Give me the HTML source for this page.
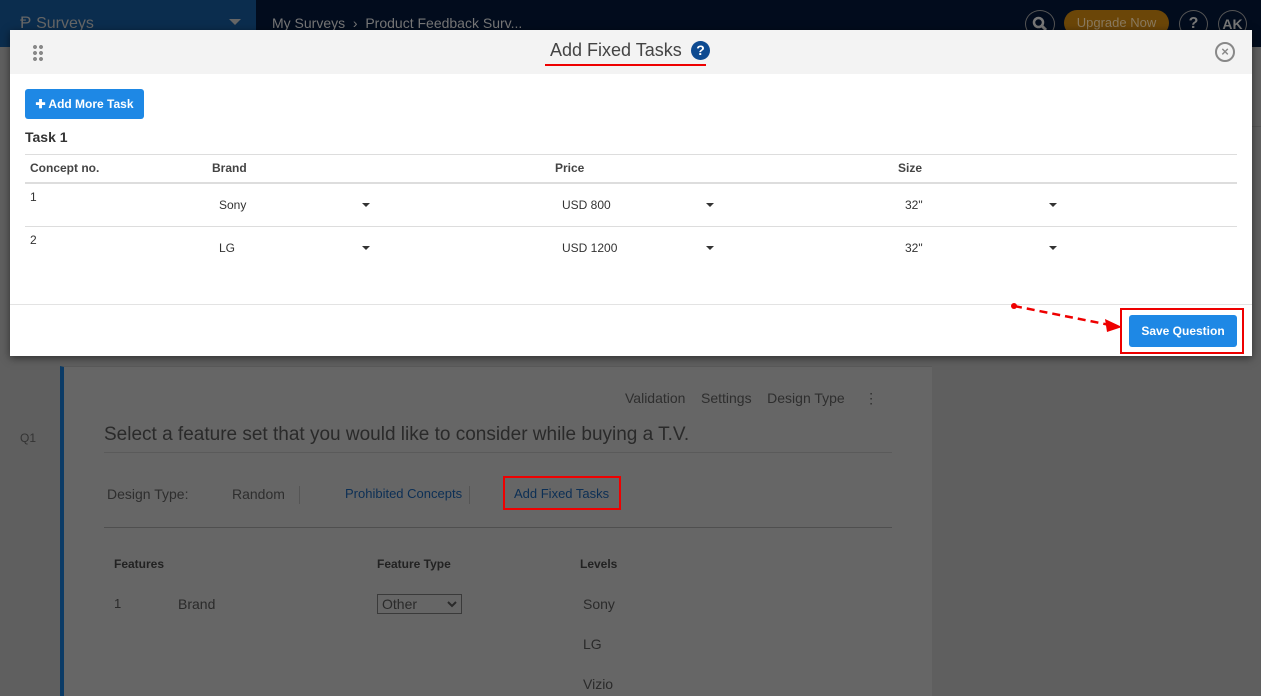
<!DOCTYPE html>
<html><head><meta charset="utf-8"><style>
*{box-sizing:border-box;margin:0;padding:0}
body{width:1261px;height:690px;overflow:hidden;background:#5f5f5f;font-family:"Liberation Sans",sans-serif;position:relative;font-size:12px;color:#333}
.abs{position:absolute}
.nav{left:0;top:0;width:1261px;height:47px;background:#020c1d}
.navl{left:0;top:0;width:256px;height:47px;background:#0b2d4e}
.card{left:60px;top:366px;width:872px;height:330px;background:#666;border-left:4px solid #0b3b66;border-top:1px solid #595959}
.modal{left:10px;top:30px;width:1242px;height:326px;background:#fff;box-shadow:0 2px 8px rgba(0,0,0,.5)}
.mh{left:0;top:0;width:1242px;height:44px;background:#f3f3f3}
.btn{background:#1e88e5;color:#fff;border-radius:3px;font-weight:bold;font-size:12px}
.row{position:absolute;left:15px;width:1212px;border-top:1px solid #ddd}
.caret{position:absolute;width:0;height:0;border-left:4px solid transparent;border-right:4px solid transparent;border-top:4px solid #333}
</style></head><body>
<div class="abs nav"></div>
<div class="abs navl"></div>
<div class="abs" style="left:20px;top:13px;color:#666;font-size:17px">Ᵽ <span style="font-size:16px">Surveys</span></div>
<div class="abs" style="left:229px;top:19px;border-left:6px solid transparent;border-right:6px solid transparent;border-top:6px solid #666"></div>
<div class="abs" style="left:272px;top:15px;color:#777;font-size:14px">My Surveys &nbsp;›&nbsp; Product Feedback Surv...</div>
<div class="abs" style="left:1025px;top:10px;width:30px;height:28px;border:1px solid #555;border-radius:50%"></div>
<svg class="abs" style="left:1031px;top:15px" width="18" height="18"><circle cx="7.5" cy="7.5" r="4.5" stroke="#777" stroke-width="2.5" fill="none"/><line x1="11" y1="11" x2="15" y2="15" stroke="#777" stroke-width="3"/></svg>
<div class="abs" style="left:1064px;top:10px;width:105px;height:26px;background:#6b4608;border-radius:13px;color:#8a7a60;font-size:13px;text-align:center;line-height:26px">Upgrade Now</div>
<div class="abs" style="left:1179px;top:10px;width:29px;height:28px;border:1px solid #555;border-radius:50%;color:#777;text-align:center;font-weight:bold;font-size:16px;line-height:26px">?</div>
<div class="abs" style="left:1218px;top:10px;width:29px;height:28px;border:1px solid #555;border-radius:50%;color:#777;text-align:center;font-weight:bold;font-size:14px;line-height:26px">AK</div>
<div class="abs" style="left:1252px;top:126px;width:9px;height:1px;background:#555"></div>

<div class="abs" style="left:20px;top:431px;color:#333;font-size:12px">Q1</div>
<div class="abs card"></div>
<div class="abs" style="left:625px;top:390px;color:#2e2e2e;font-size:14px">Validation &nbsp;&nbsp; Settings &nbsp;&nbsp; Design Type &nbsp;&nbsp;&nbsp;&nbsp;⋮</div>
<div class="abs" style="left:104px;top:424px;color:#2a2a2a;font-size:19px">Select a feature set that you would like to consider while buying a T.V.</div>
<div class="abs" style="left:104px;top:452px;width:788px;height:1px;background:#5a5a5a"></div>
<div class="abs" style="left:107px;top:486px;color:#2e2e2e;font-size:14px">Design Type:</div>
<div class="abs" style="left:232px;top:486px;color:#2e2e2e;font-size:14px">Random</div>
<div class="abs" style="left:299px;top:486px;width:1px;height:18px;background:#555"></div>
<div class="abs" style="left:345px;top:486px;color:#0c2f55;font-size:13px">Prohibited Concepts</div>
<div class="abs" style="left:469px;top:486px;width:1px;height:18px;background:#555"></div>
<div class="abs" style="left:503px;top:476px;width:118px;height:34px;border:2px solid #e00"></div>
<div class="abs" style="left:514px;top:486px;color:#0c2f55;font-size:13px">Add Fixed Tasks</div>
<div class="abs" style="left:104px;top:527px;width:788px;height:1px;background:#4f4f4f"></div>
<div class="abs" style="left:114px;top:557px;color:#222;font-weight:bold;font-size:12px">Features</div>
<div class="abs" style="left:377px;top:557px;color:#222;font-weight:bold;font-size:12px">Feature Type</div>
<div class="abs" style="left:580px;top:557px;color:#222;font-weight:bold;font-size:12px">Levels</div>
<div class="abs" style="left:114px;top:596px;color:#2a2a2a;font-size:13px">1</div>
<div class="abs" style="left:178px;top:596px;color:#2a2a2a;font-size:14px">Brand</div>
<div class="abs" style="left:377px;top:594px;width:85px;height:20px;border:1px solid #3a3a3a;color:#2a2a2a;font-size:14px;padding-left:4px;line-height:18px">Other<svg style="position:absolute;right:4px;top:6px" width="10" height="7"><polyline points="1,1 5,5 9,1" stroke="#2a2a2a" stroke-width="2" fill="none"/></svg></div>
<div class="abs" style="left:583px;top:596px;color:#2a2a2a;font-size:14px">Sony</div>
<div class="abs" style="left:583px;top:636px;color:#2a2a2a;font-size:14px">LG</div>
<div class="abs" style="left:583px;top:676px;color:#2a2a2a;font-size:14px">Vizio</div>

<div class="abs modal">
 <div class="abs mh"></div>
 <div class="abs" style="left:22px;top:14px;width:12px;height:18px;background:radial-gradient(circle,#888 1.8px,transparent 2.2px) 0 0/6px 6px"></div>
 <div class="abs" style="left:540px;top:10px;font-size:18px;color:#444">Add Fixed Tasks</div>
 <div class="abs" style="left:681px;top:11px;width:19px;height:19px;border-radius:50%;background:#0d4a91;color:#fff;font-weight:bold;font-size:14px;text-align:center;line-height:19px">?</div>
 <div class="abs" style="left:535px;top:34px;width:161px;height:2px;background:#e00"></div>
 <div class="abs" style="left:1205px;top:12px;width:20px;height:20px;border:2px solid #888;border-radius:50%;color:#888;font-weight:bold;font-size:13px;text-align:center;line-height:16px">×</div>
 <div class="abs btn" style="left:15px;top:59px;width:119px;height:30px;line-height:30px;text-align:center">✚ Add More Task</div>
 <div class="abs" style="left:15px;top:99px;font-weight:bold;font-size:14px;color:#333">Task 1</div>
 <div class="row" style="top:124px"></div>
 <div class="abs" style="left:20px;top:131px;font-weight:bold;color:#444">Concept no.</div>
 <div class="abs" style="left:202px;top:131px;font-weight:bold;color:#444">Brand</div>
 <div class="abs" style="left:545px;top:131px;font-weight:bold;color:#444">Price</div>
 <div class="abs" style="left:888px;top:131px;font-weight:bold;color:#444">Size</div>
 <div class="row" style="top:152px;border-top:2px solid #ddd"></div>
 <div class="abs" style="left:20px;top:160px">1</div>
 <div class="abs" style="left:209px;top:168px">Sony</div><div class="caret" style="left:352px;top:173px"></div>
 <div class="abs" style="left:552px;top:168px">USD 800</div><div class="caret" style="left:696px;top:173px"></div>
 <div class="abs" style="left:895px;top:168px">32"</div><div class="caret" style="left:1039px;top:173px"></div>
 <div class="row" style="top:196px"></div>
 <div class="abs" style="left:20px;top:203px">2</div>
 <div class="abs" style="left:209px;top:211px">LG</div><div class="caret" style="left:352px;top:216px"></div>
 <div class="abs" style="left:552px;top:211px">USD 1200</div><div class="caret" style="left:696px;top:216px"></div>
 <div class="abs" style="left:895px;top:211px">32"</div><div class="caret" style="left:1039px;top:216px"></div>
 <div class="abs" style="left:0;top:274px;width:1242px;height:1px;background:#e3e3e3"></div>
 <svg class="abs" style="left:995px;top:270px" width="130" height="40"><circle cx="9" cy="6" r="3" fill="#e00"/><line x1="9" y1="6" x2="110" y2="26" stroke="#e00" stroke-width="2.5" stroke-dasharray="8,5"/><polygon points="100,19 117,27 102,32" fill="#e00"/></svg>
 <div class="abs" style="left:1110px;top:278px;width:124px;height:46px;border:2px solid #e00"></div>
 <div class="abs btn" style="left:1119px;top:285px;width:108px;height:32px;line-height:32px;text-align:center">Save Question</div>
</div>
</body></html>
